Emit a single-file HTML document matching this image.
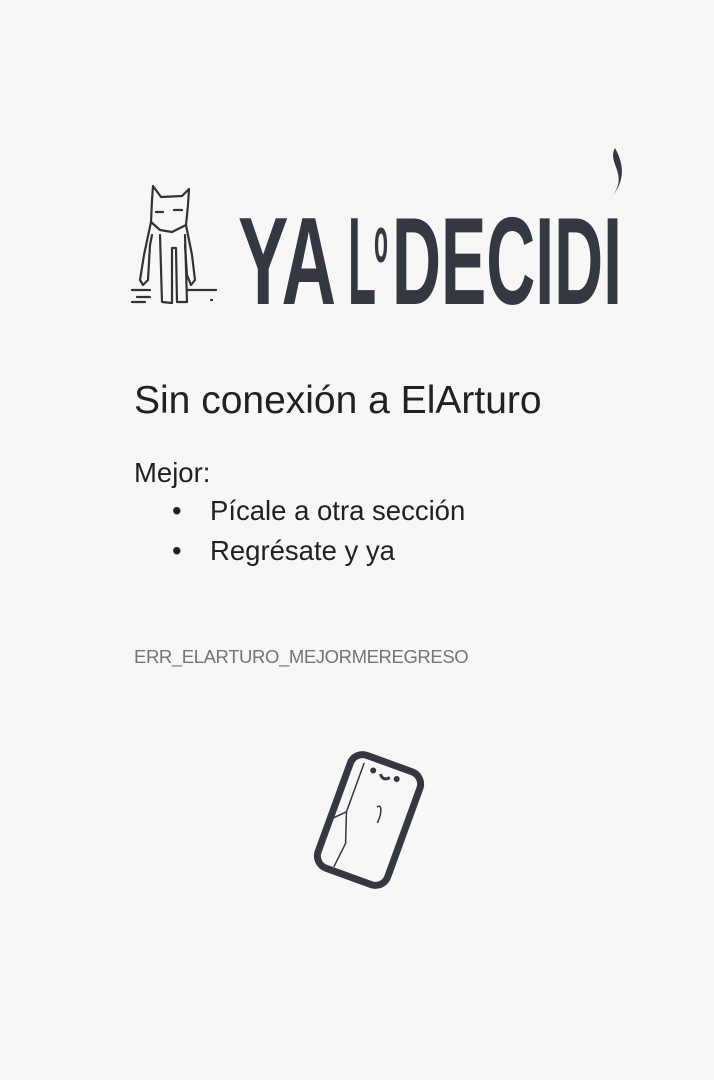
<!DOCTYPE html>
<html><head><meta charset="utf-8"><style>
body{margin:0;background:#f7f7f7;width:714px;height:1080px;position:relative;font-family:"Liberation Sans",Arial,sans-serif;color:#202124;overflow:hidden}
.t{position:absolute;left:134px;white-space:nowrap}
</style></head><body>
<svg style="position:absolute;left:0;top:0" width="714" height="1080">
 <g fill="none" stroke="#333" stroke-width="2.2" stroke-linecap="round" stroke-linejoin="round">
  <path d="M152 200 L153 186 L161 197 L182 196 L189 189 L188 205 L186 225 L172 232 L160 230 L151 222 Z"/>
  <path d="M151 222 L144 255 L140 280 L143 285 L148 280 L150 245 L152 235"/>
  <path d="M186 225 L192 255 L195 280 L191 285 L187 275 L185 245"/>
  <path d="M160 235 L162 302 L172 303 L172 248 L176 248 L177 302 L187 302 L185 235"/>
  <path d="M156 212 L163 212 M174 210 L182 210"/>
  <path d="M132 290 L150 290 M137 297 L150 297 M132 302 L145 302 M188 290 L216 290"/>
  <path d="M211 300 L212 300"/>
 </g>
 <g font-family="Liberation Sans Narrow,Liberation Sans,sans-serif" font-weight="bold" fill="#343840">
  <text x="238" y="304" font-size="124" textLength="98" lengthAdjust="spacingAndGlyphs">YA</text>
  <text x="348" y="304" font-size="124" textLength="28" lengthAdjust="spacingAndGlyphs">L</text>
  <text x="374" y="262" font-size="64" textLength="14" lengthAdjust="spacingAndGlyphs">o</text>
  <text x="392" y="304" font-size="124" textLength="230" lengthAdjust="spacingAndGlyphs">DECIDI</text>
 </g>
 <path d="M615 148 C608 160 622 170 618 185 C616 192 612 197 610 200 C617 190 630 175 615 148 Z" fill="#343840"/>
 <g transform="rotate(20 369 820)">
  <rect x="332" y="760" width="74" height="120" rx="13" fill="none" stroke="#343840" stroke-width="7"/>
  <circle cx="356" cy="772" r="3" fill="#343840"/><circle cx="381" cy="772" r="3" fill="#343840"/>
  <path d="M364 773 Q369 779 374 773" stroke="#343840" stroke-width="3" fill="none"/>
  <path d="M345 768 L345 820 L335 830 M345 820 L355 850 L352 876 M372 805 Q376 800 378 812 L378 820" stroke="#343840" stroke-width="1.5" fill="none"/>
 </g>
</svg>
<div class="t" style="top:379px;font-size:39px">Sin conexión a ElArturo</div>
<div class="t" style="top:457px;font-size:27.5px">Mejor:</div>
<div class="t" style="top:495px;left:172px;font-size:27.5px">•<span style="position:absolute;left:38px">Pícale a otra sección</span></div>
<div class="t" style="top:535px;left:172px;font-size:27.5px">•<span style="position:absolute;left:38px">Regrésate y ya</span></div>
<div class="t" style="top:646px;font-size:18.5px;color:#757575;letter-spacing:-0.4px">ERR_ELARTURO_MEJORMEREGRESO</div>
</body></html>
